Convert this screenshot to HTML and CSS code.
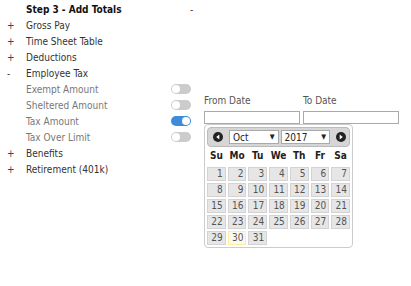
FILE: index.html
```html
<!DOCTYPE html>
<html>
<head>
<meta charset="utf-8">
<link rel="stylesheet" href="styles.css">
</head>
<body>
<div class="page">
  <div class="left">
    <div class="row head"><span class="sign"></span><span class="label">Step 3 - Add Totals</span><span class="end">-</span></div>
    <div class="row"><span class="sign">+</span><span class="label">Gross Pay</span></div>
    <div class="row"><span class="sign">+</span><span class="label">Time Sheet Table</span></div>
    <div class="row"><span class="sign">+</span><span class="label">Deductions</span></div>
    <div class="row"><span class="sign">-</span><span class="label">Employee Tax</span></div>
    <div class="row sub"><span class="sign"></span><span class="label">Exempt Amount</span><span class="toggle"></span></div>
    <div class="row sub"><span class="sign"></span><span class="label">Sheltered Amount</span><span class="toggle"></span></div>
    <div class="row sub"><span class="sign"></span><span class="label">Tax Amount</span><span class="toggle on"></span></div>
    <div class="row sub"><span class="sign"></span><span class="label">Tax Over Limit</span><span class="toggle"></span></div>
    <div class="row"><span class="sign">+</span><span class="label">Benefits</span></div>
    <div class="row"><span class="sign">+</span><span class="label">Retirement (401k)</span></div>
  </div>
  <div class="right">
    <div class="fields">
      <div class="field from">
        <div class="flabel">From Date</div>
        <div class="input"></div>
        <div class="picker">
          <div class="ph">
            <svg class="nav prev" width="10" height="10" viewBox="0 0 10 10"><circle cx="5" cy="5" r="5" fill="#222"/><path d="M6.3 2.5 L3.2 5 L6.3 7.5 Z" fill="#fff"/></svg>
            <div class="sel month"><span>Oct</span><span class="arr">▼</span></div>
            <div class="sel year"><span>2017</span><span class="arr">▼</span></div>
            <svg class="nav next" width="10" height="10" viewBox="0 0 10 10"><circle cx="5" cy="5" r="5" fill="#222"/><path d="M3.7 2.5 L6.8 5 L3.7 7.5 Z" fill="#fff"/></svg>
          </div>
          <div class="grid">
            <div class="dh">Su</div><div class="dh">Mo</div><div class="dh">Tu</div><div class="dh">We</div><div class="dh">Th</div><div class="dh">Fr</div><div class="dh">Sa</div>
            <div class="d">1</div><div class="d">2</div><div class="d">3</div><div class="d">4</div><div class="d">5</div><div class="d">6</div><div class="d">7</div>
            <div class="d">8</div><div class="d">9</div><div class="d">10</div><div class="d">11</div><div class="d">12</div><div class="d">13</div><div class="d">14</div>
            <div class="d">15</div><div class="d">16</div><div class="d">17</div><div class="d">18</div><div class="d">19</div><div class="d">20</div><div class="d">21</div>
            <div class="d">22</div><div class="d">23</div><div class="d">24</div><div class="d">25</div><div class="d">26</div><div class="d">27</div><div class="d">28</div>
            <div class="d">29</div><div class="d today">30</div><div class="d">31</div>
          </div>
        </div>
      </div>
      <div class="field to">
        <div class="flabel">To Date</div>
        <div class="input"></div>
      </div>
    </div>
  </div>
</div>
</body>
</html>
```
FILE: styles.css
```css
html, body { margin: 0; padding: 0; background: #fff; }
body { font-family: "DejaVu Sans Condensed", "DejaVu Sans", Verdana, sans-serif; font-stretch: condensed; font-size: 10px; color: #333; }
.page { display: flex; padding-top: 1px; }
.left { width: 204px; flex: none; }
.row { display: flex; align-items: center; height: 16px; }
.sign { width: 26px; flex: none; padding-left: 7px; box-sizing: border-box; color: #444; }
.label { flex: 1; white-space: nowrap; }
.head .label { font-weight: bold; color: #111; }
.end { width: 14px; flex: none; color: #333; }
.sub .label { color: #777; }
.toggle { width: 20px; height: 10px; border-radius: 5px; background: #ccc; flex: none; margin-right: 13px; position: relative; }
.toggle::after { content: ""; position: absolute; left: 1px; top: 1px; width: 8px; height: 8px; border-radius: 50%; background: #fff; }
.toggle.on { background: #3f8bdb; }
.toggle.on::after { left: 11px; }
.right { padding-top: 93px; }
.fields { display: flex; gap: 3px; }
.field { width: 96px; }
.from .input { width: 94px; }
.to .input { width: 94px; }
.flabel { color: #555; height: 14px; line-height: 14px; margin-bottom: 3px; }
.input { height: 11px; border: 1px solid #aaa; background: #fff; }
.picker { width: 143px; margin-top: 0; border: 1px solid #ccc; border-radius: 4px; padding: 2px; background: #fff; position: relative; z-index: 1; }
.ph { display: flex; align-items: center; height: 18px; background: #d6d6d6; border: 1px solid #bbb; border-radius: 4px; padding: 0 3px 0 5px; }
.nav { flex: none; }
.sel { height: 14px; border: 1px solid #aaa; background: #fff; display: flex; align-items: center; justify-content: space-between; padding: 0 3px; box-sizing: border-box; color: #222; }
.month { width: 50px; margin-left: 6px; }
.year { width: 50px; margin-left: 2px; margin-right: 6px; }
.arr { font-size: 7px; }
.grid { display: grid; grid-template-columns: repeat(7, 1fr); column-gap: 2px; row-gap: 2px; }
.dh { height: 18px; line-height: 18px; text-align: center; font-weight: bold; color: #222; }
.d { height: 12px; line-height: 12px; border: 1px solid #d3d3d3; background: #e6e6e6; color: #555; text-align: right; padding-right: 2px; }
.d.today { background: #fbf9ee; border-color: #fcefa1; }
```
